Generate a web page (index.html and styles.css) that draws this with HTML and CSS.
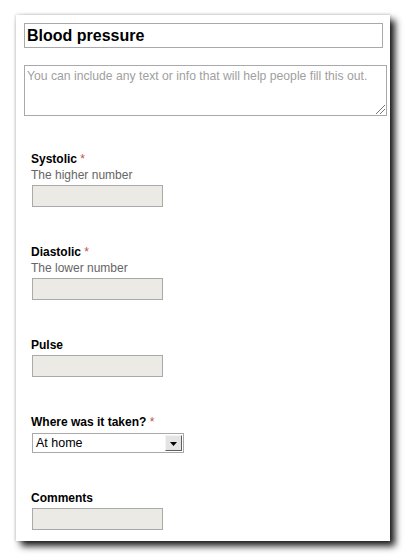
FILE: index.html
```html
<!DOCTYPE html>
<html>
<head>
<meta charset="utf-8">
<link rel="stylesheet" href="styles.css">
</head>
<body>
<div class="card">
  <div class="title">Blood pressure</div>
  <div class="intro">You can include any text or info that will help people fill this out.<span class="grip"></span></div>
  <div class="fields">
    <div class="field">
      <div class="label">Systolic <span class="req">*</span></div>
      <div class="desc">The higher number</div>
      <div class="input"></div>
    </div>
    <div class="field">
      <div class="label">Diastolic <span class="req">*</span></div>
      <div class="desc">The lower number</div>
      <div class="input"></div>
    </div>
    <div class="field">
      <div class="label">Pulse</div>
      <div class="input"></div>
    </div>
    <div class="field">
      <div class="label">Where was it taken? <span class="req">*</span></div>
      <div class="select"><span class="val">At home</span><span class="btn"><svg width="7" height="4" viewBox="0 0 7 4"><path d="M0 0H7L3.5 4Z" fill="#000"/></svg></span></div>
    </div>
    <div class="field">
      <div class="label">Comments</div>
      <div class="input"></div>
    </div>
  </div>
</div>
</body>
</html>
```
FILE: styles.css
```css
html, body { margin: 0; padding: 0; background: #fff; }
body { font-family: "Liberation Sans", Arial, sans-serif; font-size: 12px; color: #000; min-height: 558px; }
.card {
  margin: 15px 0 0 16px;
  width: 374px;
  height: 526px;
  box-sizing: border-box;
  background: #fff;
  padding: 8px 0 0 8px;
  box-shadow: 5px 5px 7px rgba(0,0,0,0.9), 0 0 3px rgba(0,0,0,0.25);
}
.title {
  width: 359px; height: 25px; box-sizing: border-box;
  border: 1px solid #a9a9ad;
  font-size: 16px; font-weight: bold;
  padding: 2px 0 0 2px; line-height: 20px;
}
.intro {
  position: relative;
  margin-top: 17px;
  width: 363px; height: 51px; box-sizing: border-box;
  border: 1px solid #a9a9ad;
  color: #a0a0a0;
  font-size: 12.2px;
  padding: 2px 0 0 2px; line-height: 16px;
}
.grip {
  position: absolute; right: 1px; bottom: 1px; width: 9px; height: 9px;
  background: linear-gradient(135deg, transparent 45%, #777 45%, #777 52%, transparent 52%, transparent 70%, #777 70%, #777 77%, transparent 77%);
}
.fields { padding: 35px 0 0 7px; display: flex; flex-direction: column; gap: 37px; }
.field { display: flex; flex-direction: column; }
.label { font-weight: bold; line-height: 16px; }
.req { color: #c0504d; font-weight: normal; }
.desc { color: #666; line-height: 16px; }
.input {
  margin: 2px 0 0 1px;
  width: 131px; height: 22px; box-sizing: border-box;
  background: #ebeae4; border: 1px solid #a9a9a9;
}
.select {
  margin: 3px 0 0 1px;
  width: 152px; height: 20px; box-sizing: border-box;
  border: 1px solid #a9a9a9;
  display: flex; align-items: stretch;
}
.val { flex: 1; padding-left: 3px; line-height: 18px; font-size: 12.5px; }
.btn {
  width: 17px; box-sizing: border-box; margin: 1px;
  background: #e4e4e4;
  border: 1px solid; border-color: #f4f4f4 #606060 #606060 #f4f4f4;
  display: flex; align-items: center; justify-content: center;
}
.btn svg { display: block; margin-top: 1px; }
```
